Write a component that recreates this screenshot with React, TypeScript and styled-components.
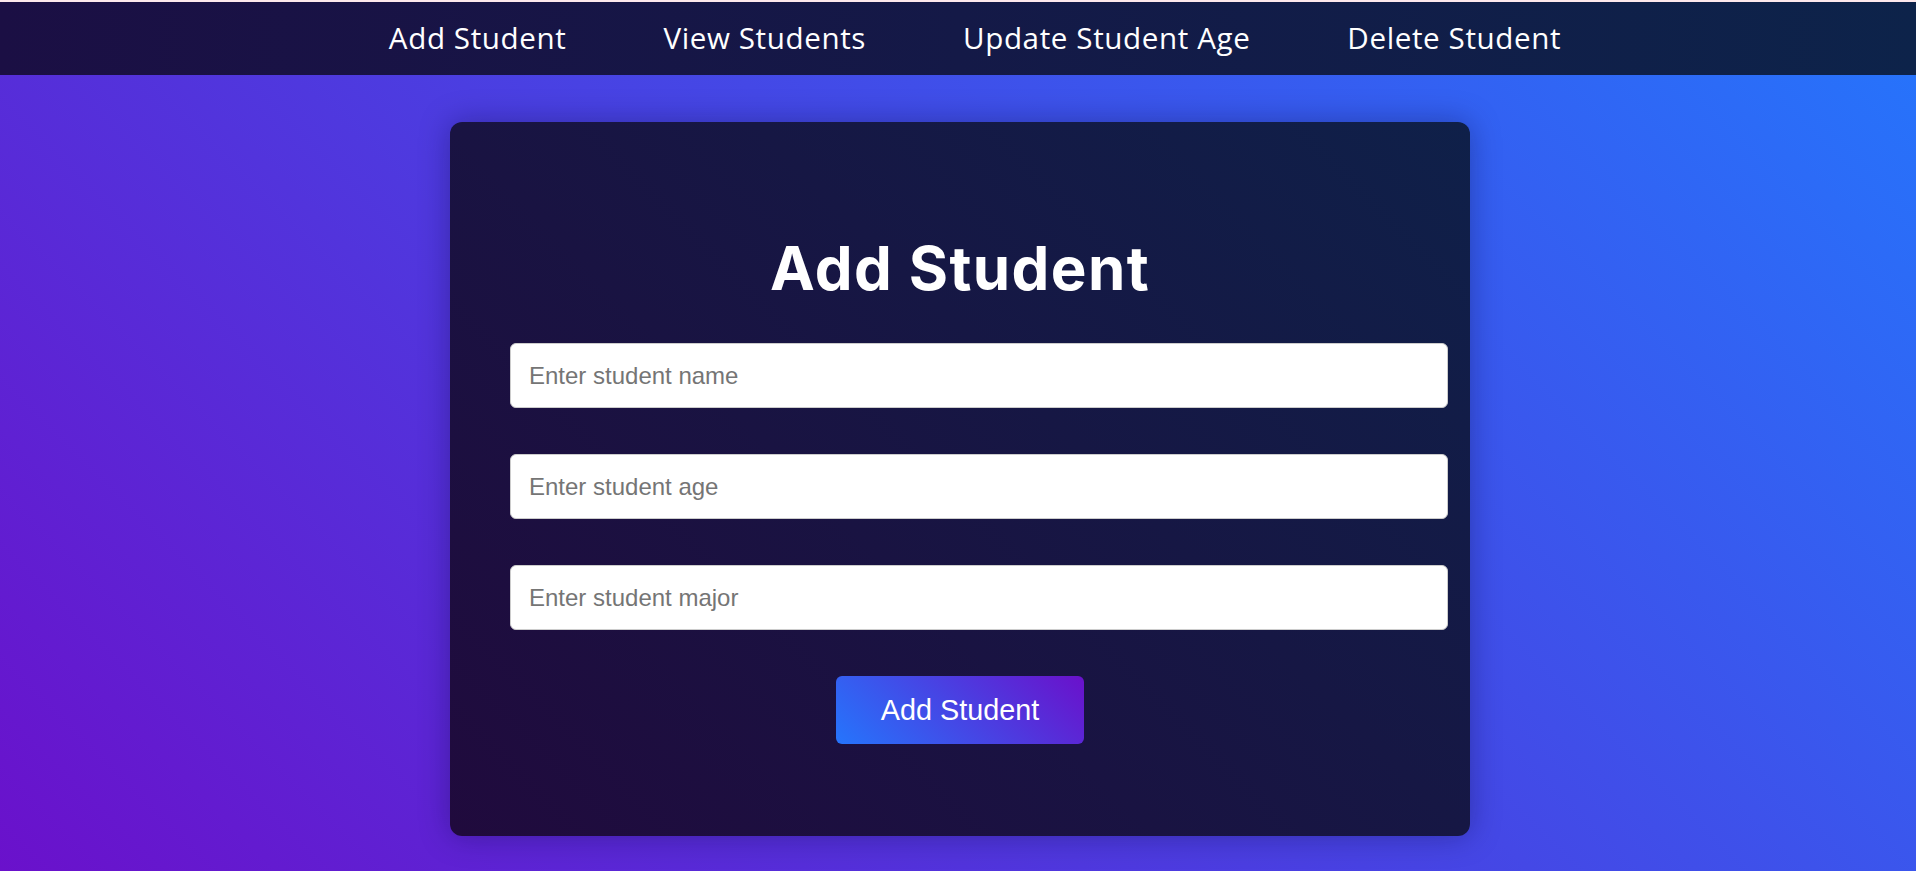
import React from "react";
import styled, { createGlobalStyle } from "styled-components";

const GlobalStyle = createGlobalStyle`
  html, body {
    margin: 0;
    padding: 0;
  }
  body {
    font-family: "Liberation Sans", Arial, sans-serif;
    background: #fde8ec;
  }
  * { box-sizing: border-box; }
`;

const Page = styled.div`
  min-height: 100vh;
  display: flex;
  flex-direction: column;
  padding-top: 2px;
`;

const Body = styled.div`
  flex: 1;
  display: flex;
  flex-direction: column;
  background: linear-gradient(45deg, #6a11cb, #2575fc);
`;

const NavBar = styled.nav`
  height: 73px;
  display: flex;
  align-items: center;
  justify-content: center;
  padding-bottom: 2px;
  background: linear-gradient(to right, #1b0f44, #0d234a);
`;

const NavList = styled.ul`
  list-style: none;
  margin: 0;
  padding: 0 0 0 34px;
  display: flex;
  gap: 97px;
`;

const NavItem = styled.li`
  font-family: "Open Sans", "Noto Sans", sans-serif;
  font-size: 29.6px;
  letter-spacing: 0.6px;
  color: #ffffff;
  cursor: pointer;
  white-space: nowrap;
`;

const Main = styled.main`
  display: flex;
  justify-content: center;
  padding: 47px 0 0 4px;
`;

const Card = styled.section`
  width: 1020px;
  padding: 0 60px 92px;
  border-radius: 12px;
  background: linear-gradient(45deg, #200a3d, #0f2049);
  box-shadow: 0 0 30px rgba(10, 10, 60, 0.35);
`;

const Title = styled.h2`
  margin: 110px 0 39px;
  text-align: center;
  font-family: Inter, "Open Sans", sans-serif;
  font-weight: 700;
  font-size: 60px;
  line-height: 72px;
  letter-spacing: 1.4px;
  color: #ffffff;
`;

const Form = styled.form`
  display: flex;
  flex-direction: column;
  align-items: flex-start;
  gap: 46px;
`;

const Input = styled.input`
  box-sizing: content-box;
  width: 100%;
  margin: 0;
  padding: 18px;
  font-family: "Liberation Sans", Arial, sans-serif;
  font-size: 24px;
  line-height: 28px;
  height: 27px;
  border: 1px solid #cccccc;
  border-radius: 6px;
  background: #ffffff;
  color: #222;
  outline: none;
  &::placeholder {
    color: #757575;
  }
`;

const Button = styled.button`
  align-self: center;
  width: 248px;
  height: 68px;
  border: none;
  border-radius: 6px;
  background: linear-gradient(45deg, #2575fc, #6a11cb);
  color: #ffffff;
  font-family: "Liberation Sans", Arial, sans-serif;
  font-size: 28.8px;
  cursor: pointer;
`;

export default function App() {
  return (
    <>
      <GlobalStyle />
      <Page>
        <Body>
          <NavBar>
            <NavList>
              <NavItem>Add Student</NavItem>
              <NavItem>View Students</NavItem>
              <NavItem>Update Student Age</NavItem>
              <NavItem>Delete Student</NavItem>
            </NavList>
          </NavBar>
          <Main>
            <Card>
              <Title>Add Student</Title>
              <Form onSubmit={(e) => e.preventDefault()}>
                <Input type="text" placeholder="Enter student name" />
                <Input type="number" placeholder="Enter student age" />
                <Input type="text" placeholder="Enter student major" />
                <Button type="submit">Add Student</Button>
              </Form>
            </Card>
          </Main>
        </Body>
      </Page>
    </>
  );
}
